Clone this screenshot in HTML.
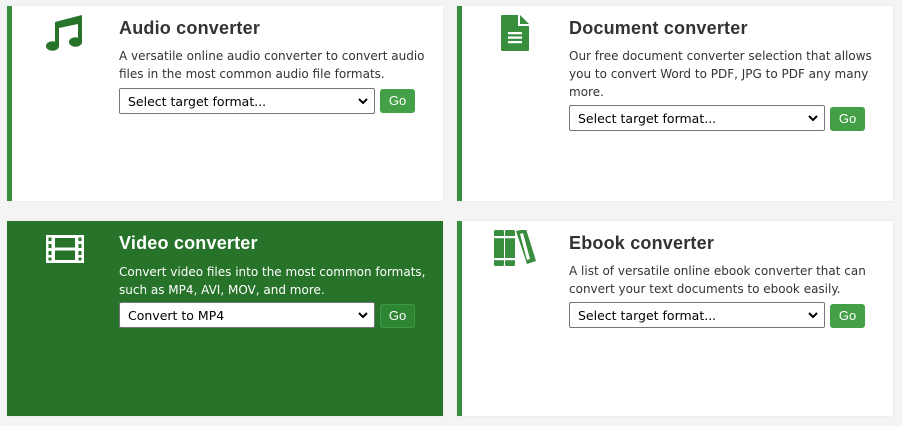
<!DOCTYPE html>
<html><head><style>
*{box-sizing:border-box;margin:0;padding:0}
body{width:902px;height:426px;background:#f4f4f4;position:relative;overflow:hidden;font-family:"DejaVu Sans","Liberation Sans",sans-serif}
.card{position:absolute;width:436px;height:195px;background:#fff;border-left:5px solid #388e3c;box-shadow:0 0 2px rgba(0,0,0,.08)}
.card.v{background:#267329;border-left-color:#267329;color:#fff}
.ic{position:absolute}
.t{position:absolute;left:107px;top:12px;font-family:"Liberation Sans",sans-serif;font-weight:bold;font-size:18px;color:#333;letter-spacing:.2px}
.v .t{color:#fff}
.d{position:absolute;left:107px;top:41px;width:318px;font-size:12px;line-height:18px;color:#333}
.v .d{color:#fff}
.sel{position:absolute;left:107px;width:256px;height:26px;border:1px solid #767676;border-radius:2px;background:#fff;font-size:12.5px;color:#000;padding:5px 8px}
.sel svg{position:absolute;right:6px;top:9px}
.go{position:absolute;left:368px;width:35px;height:24px;background:#43a047;border-radius:3px;color:#fff;font-size:13px;text-align:center;line-height:24px;font-family:"Liberation Sans",sans-serif}
.v .go{background:#2e8533;border:1px solid #3c9a40;line-height:22px}
</style></head><body>

<div class="card" style="left:7px;top:6px">
<svg class="ic" viewBox="0 0 37 36" style="left:34px;top:9px;width:37px;height:36px"><g fill="#267329"><path d="M9 7 L36 0 V27 H32 V9 L13 13 V31 H9 Z"/><ellipse cx="6.5" cy="31" rx="6.5" ry="4.8"/><ellipse cx="29.5" cy="27" rx="6.5" ry="4.8"/></g></svg>
<div class="t">Audio converter</div>
<div class="d">A versatile online audio converter to convert audio files in the most common audio file formats.</div>
<div class="sel" style="top:82px">Select target format...<svg width="10" height="7" viewBox="0 0 10 7"><path d="M1 1 L5 5 L9 1" fill="none" stroke="#000" stroke-width="2"/></svg></div>
<div class="go" style="top:83px">Go</div>
</div>

<div class="card" style="left:457px;top:6px">
<svg class="ic" viewBox="0 0 28 36" style="left:39px;top:9px;width:28px;height:36px"><path fill="#388e3c" d="M1 0 H17 V11 H28 V35 a1 1 0 0 1 -1 1 H1 a1 1 0 0 1 -1 -1 V1 a1 1 0 0 1 1 -1Z"/><path fill="#388e3c" d="M19 0 L28 9 H19 Z"/><path fill="#fff" d="M7 17h14v2.2H7zM7 21.5h14v2.2H7zM7 26h14v2.2H7z"/></svg>
<div class="t">Document converter</div>
<div class="d">Our free document converter selection that allows you to convert Word to PDF, JPG to PDF any many more.</div>
<div class="sel" style="top:99px">Select target format...<svg width="10" height="7" viewBox="0 0 10 7"><path d="M1 1 L5 5 L9 1" fill="none" stroke="#000" stroke-width="2"/></svg></div>
<div class="go" style="top:101px">Go</div>
</div>

<div class="card v" style="left:7px;top:221px">
<svg class="ic" viewBox="0 0 38 28" style="left:34px;top:14px;width:38px;height:28px"><path fill="#fff" fill-rule="evenodd" d="M0 0H38V28H0Z M2.5 2.5v3.5h3v-3.5z M2.5 9v4h3v-4z M2.5 16v4h3v-4z M2.5 22.5v3h3v-3z M32.5 2.5v3.5h3v-3.5z M32.5 9v4h3v-4z M32.5 16v4h3v-4z M32.5 22.5v3h3v-3z M9 3v9.5h20V3z M9 15.5v9.5h20v-9.5z"/></svg>
<div class="t">Video converter</div>
<div class="d" style="top:42px">Convert video files into the most common formats, such as MP4, AVI, MOV, and more.</div>
<div class="sel" style="top:81px">Convert to MP4<svg width="10" height="7" viewBox="0 0 10 7"><path d="M1 1 L5 5 L9 1" fill="none" stroke="#000" stroke-width="2"/></svg></div>
<div class="go" style="top:83px">Go</div>
</div>

<div class="card" style="left:457px;top:221px">
<svg class="ic" viewBox="0 0 42 36" style="left:32px;top:9px;width:42px;height:36px"><g fill="#388e3c"><rect x="0" y="0" width="10" height="36" rx="1.5"/><rect x="11" y="0" width="10" height="36" rx="1.5"/><path d="M22 1 L32 -1 L42 31 L33 34 Z"/></g><g fill="#fff"><rect x="0" y="6" width="21" height="2.2"/><rect x="0" y="28" width="21" height="2.2"/><path d="M26 4 L29 3 L36 29 L33 30Z"/></g></svg>
<div class="t">Ebook converter</div>
<div class="d" style="top:41px">A list of versatile online ebook converter that can convert your text documents to ebook easily.</div>
<div class="sel" style="top:81px">Select target format...<svg width="10" height="7" viewBox="0 0 10 7"><path d="M1 1 L5 5 L9 1" fill="none" stroke="#000" stroke-width="2"/></svg></div>
<div class="go" style="top:83px">Go</div>
</div>

</body></html>
